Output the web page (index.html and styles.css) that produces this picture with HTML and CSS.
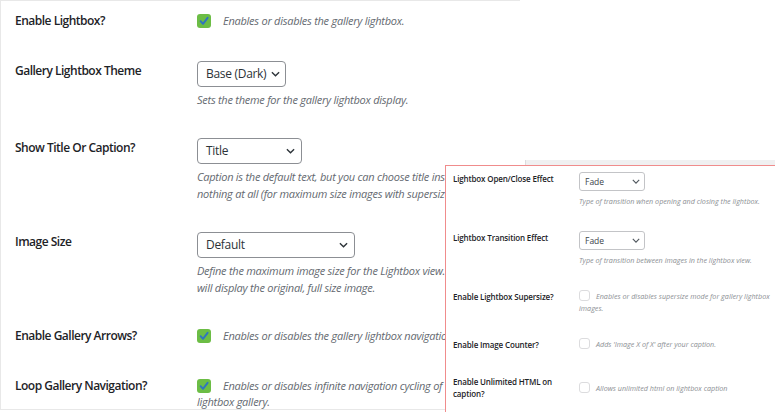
FILE: index.html
```html
<!DOCTYPE html>
<html>
<head>
<meta charset="utf-8">
<link rel="stylesheet" href="styles.css">
</head>
<body>
<div class="main">
  <div class="row check-row">
    <div class="label">Enable Lightbox?</div>
    <div class="field"><span class="cb"><svg viewBox="0 0 14 14" width="14" height="14"><rect x="0" y="0" width="14" height="14" rx="3" fill="#6cbd45"/><path d="M3.6 7.2 L6 9.8 L10.6 3.8" fill="none" stroke="#2f74c0" stroke-width="1.9" stroke-linecap="round" stroke-linejoin="round"/></svg></span><span class="desc">Enables or disables the gallery lightbox.</span></div>
  </div>
  <div class="row">
    <div class="label">Gallery Lightbox Theme</div>
    <div class="field">
      <div class="select w-theme"><span>Base (Dark)</span><svg class="chev" viewBox="0 0 10 6" width="9" height="6"><path d="M1 1 L5 5 L9 1" fill="none" stroke="#2c3338" stroke-width="1.5"/></svg></div>
      <p class="note">Sets the theme for the gallery lightbox display.</p>
    </div>
  </div>
  <div class="row">
    <div class="label">Show Title Or Caption?</div>
    <div class="field">
      <div class="select w-title"><span>Title</span><svg class="chev" viewBox="0 0 10 6" width="9" height="6"><path d="M1 1 L5 5 L9 1" fill="none" stroke="#2c3338" stroke-width="1.5"/></svg></div>
      <p class="note">Caption is the default text, but you can choose title instead or<br>nothing at all (for maximum size images with supersize).</p>
    </div>
  </div>
  <div class="row">
    <div class="label">Image Size</div>
    <div class="field">
      <div class="select w-size"><span>Default</span><svg class="chev" viewBox="0 0 10 6" width="9" height="6"><path d="M1 1 L5 5 L9 1" fill="none" stroke="#2c3338" stroke-width="1.5"/></svg></div>
      <p class="note">Define the maximum image size for the Lightbox view. Default<br>will display the original, full size image.</p>
    </div>
  </div>
  <div class="row check-row">
    <div class="label">Enable Gallery Arrows?</div>
    <div class="field"><span class="cb"><svg viewBox="0 0 14 14" width="14" height="14"><rect x="0" y="0" width="14" height="14" rx="3" fill="#6cbd45"/><path d="M3.6 7.2 L6 9.8 L10.6 3.8" fill="none" stroke="#2f74c0" stroke-width="1.9" stroke-linecap="round" stroke-linejoin="round"/></svg></span><span class="desc">Enables or disables the gallery lightbox navigation arrows.</span></div>
  </div>
  <div class="row check-row">
    <div class="label">Loop Gallery Navigation?</div>
    <div class="field"><span class="cb"><svg viewBox="0 0 14 14" width="14" height="14"><rect x="0" y="0" width="14" height="14" rx="3" fill="#6cbd45"/><path d="M3.6 7.2 L6 9.8 L10.6 3.8" fill="none" stroke="#2f74c0" stroke-width="1.9" stroke-linecap="round" stroke-linejoin="round"/></svg></span><span class="desc">Enables or disables infinite navigation cycling of the</span><br><span class="desc">lightbox gallery.</span></div>
  </div>
</div>

<div class="backstrip"></div>

<div class="overlay">
  <div class="orow">
    <div class="olabel">Lightbox Open/Close Effect</div>
    <div class="ofield">
      <div class="oselect"><span>Fade</span><svg class="ochev" viewBox="0 0 10 6" width="8" height="5"><path d="M1 1 L5 5 L9 1" fill="none" stroke="#50575e" stroke-width="1.4"/></svg></div>
      <p class="onote">Type of transition when opening and closing the lightbox.</p>
    </div>
  </div>
  <div class="orow">
    <div class="olabel">Lightbox Transition Effect</div>
    <div class="ofield">
      <div class="oselect"><span>Fade</span><svg class="ochev" viewBox="0 0 10 6" width="8" height="5"><path d="M1 1 L5 5 L9 1" fill="none" stroke="#50575e" stroke-width="1.4"/></svg></div>
      <p class="onote">Type of transition between images in the lightbox view.</p>
    </div>
  </div>
  <div class="orow">
    <div class="olabel">Enable Lightbox Supersize?</div>
    <div class="ofield"><span class="ocb"></span><span class="onote inl">Enables or disables supersize mode for gallery lightbox</span><br><span class="onote inl">images.</span></div>
  </div>
  <div class="orow">
    <div class="olabel">Enable Image Counter?</div>
    <div class="ofield"><span class="ocb"></span><span class="onote inl">Adds 'Image X of X' after your caption.</span></div>
  </div>
  <div class="orow center">
    <div class="olabel">Enable Unlimited HTML on<br>caption?</div>
    <div class="ofield"><span class="ocb"></span><span class="onote inl">Allows unlimited html on lightbox caption</span></div>
  </div>
</div>
</body>
</html>
```

FILE: styles.css
```css
html, body {
  margin: 0;
  padding: 0;
  background: #ffffff;
}
body {
  width: 775px;
  height: 412px;
  overflow: hidden;
  position: relative;
  font-family: "Open Sans", "Noto Sans", sans-serif;
  color: #1d2327;
}

.main {
  box-sizing: border-box;
  width: 520px;
  height: 410px;
  border-top: 1px solid #e8e8e8;
  border-left: 1px solid #e8e8e8;
  border-bottom: 1px solid #e8e8e8;
  padding: 10px 0 0 14px;
  display: flex;
  flex-direction: column;
  gap: 30px;
}

.row {
  display: grid;
  grid-template-columns: 182px 1fr;
  align-items: start;
}

.label {
  font-size: 12px;
  font-weight: 600;
  letter-spacing: -0.5px;
  line-height: 20px;
  white-space: nowrap;
}

.field {
  font-size: 11px;
  line-height: 20px;
  white-space: nowrap;
}

.cb {
  display: inline-block;
  width: 14px;
  height: 14px;
  vertical-align: -3px;
  margin-right: 12px;
}
.cb svg { display: block; }

.desc {
  font-style: italic;
  color: #646970;
  font-size: 11px;
  letter-spacing: -0.25px;
}
.check-row .field { line-height: 16px; padding-top: 2px; }

.select {
  box-sizing: border-box;
  height: 26px;
  border: 1px solid #8c8f94;
  border-radius: 4px;
  display: flex;
  align-items: center;
  justify-content: space-between;
  padding: 0 6px 0 8px;
  font-size: 12px;
  letter-spacing: -0.3px;
  color: #2c3338;
}
.w-theme { width: 89px; padding-right: 5px; }
.w-title { width: 105px; }
.w-size { width: 158px; }
.chev { display: block; flex: none; }

.note {
  margin: 4px 0 0 0;
  font-style: italic;
  color: #646970;
  font-size: 11px;
  letter-spacing: -0.25px;
  line-height: 17px;
}

.backstrip {
  position: absolute;
  left: 525px;
  top: 160px;
  width: 250px;
  height: 6px;
  background: #f0f0f1;
  border-left: 1px solid #dcdcde;
}

.overlay {
  position: absolute;
  left: 445px;
  top: 165px;
  width: 340px;
  height: 260px;
  box-sizing: border-box;
  background: #ffffff;
  border: 1px solid #f08c8c;
  padding: 6px 0 0 7px;
  display: flex;
  flex-direction: column;
  gap: 24px;
}

.orow {
  display: grid;
  grid-template-columns: 126px 1fr;
  align-items: start;
}
.orow.center { align-items: center; }

.olabel {
  font-size: 8px;
  font-weight: 600;
  letter-spacing: -0.15px;
  line-height: 12px;
  color: #1d2327;
  padding-top: 1px;
  white-space: nowrap;
}

.ofield {
  font-size: 7.2px;
  line-height: 12px;
  white-space: nowrap;
}

.oselect {
  box-sizing: border-box;
  width: 66px;
  height: 19px;
  border: 1px solid #c3c4c7;
  border-radius: 3px;
  display: flex;
  align-items: center;
  justify-content: space-between;
  padding: 0 4px 0 5px;
  font-size: 8.5px;
  color: #3c434a;
}
.ochev { display: block; flex: none; }

.onote {
  margin: 4px 0 0 0;
  font-style: italic;
  color: #8c8f94;
  font-size: 7.2px;
  line-height: 12px;
}
.onote.inl { margin: 0; }

.ocb {
  display: inline-block;
  box-sizing: border-box;
  width: 11px;
  height: 11px;
  border: 1px solid #dcdcde;
  border-radius: 3px;
  vertical-align: -2px;
  margin-right: 6px;
}
```
